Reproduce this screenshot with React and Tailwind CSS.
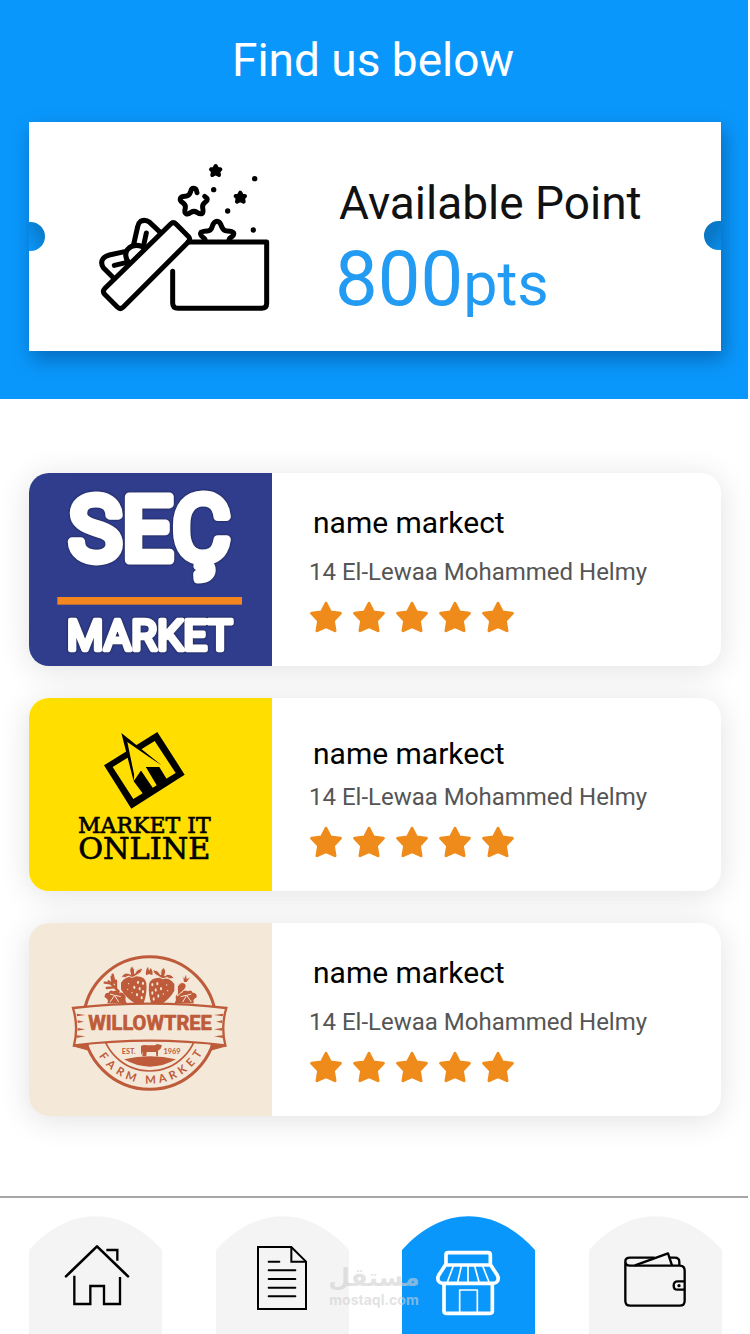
import React from 'react';
import clsx from 'clsx';

const GiftIcon = () => (
  <svg
    viewBox="0 0 630 510"
    className="w-[210px] h-[170px] shrink-0"
    fill="none"
    stroke="#000"
    strokeWidth="15"
    strokeLinecap="round"
    strokeLinejoin="round"
    aria-hidden="true"
  >
    {/* Box */}
    <path d="M324 276 H560 V460 Q560 475 545 475 H294 Q278 475 278 459 V364" />
    {/* Lid */}
    <path d="M272 222 Q280 214 288 222 L326 260 Q332 268 325 276 L130 471 Q121 480 112 471 L74 433 Q66 424 75 415 Z" />
    {/* Bow */}
    <path d="M103 386 L70 353 Q60 338 70 325 Q76 318 88 315 L134 305" />
    <path d="M241 247 L209 217 Q196 207 182 214 Q175 219 173 230 L161 283" />
    <path d="M148 341 Q130 318 142 299 Q160 280 185 289 L193 297" />
    <path d="M103 346 L141 337" />
    <path d="M199 249 L190 290" />
    {/* Open star */}
    <path d="M351 128 Q349 115 341 115 Q334 115 332 125 Q328 139 316 139 Q304 139 301 145 Q299 152 308 158 Q318 165 316 174 Q312 188 318 191 Q324 194 333 187 Q342 181 351 187 Q361 194 367 190 Q371 187 368 174 Q366 165 374 158 Q385 151 381 145 L374 139" />
    {/* Star leaving the box */}
    <path d="M375 273 Q377 267 369 262 Q358 253 363 247 Q367 244 382 243 Q393 243 397 229 Q402 214 411 214 Q420 214 425 230 Q430 243 441 243 Q457 243 461 249 Q463 255 453 262 Q446 267 447 273" />
    {/* Small stars and sparks */}
    <g fill="#000" strokeWidth="12">
      <path d="M407 48 L412 57 L421 58 L415 64 L417 75 L407 70 L397 75 L399 64 L393 58 L402 57 Z" />
      <path d="M481 128 L486 137 L495 138 L489 144 L491 155 L481 150 L471 155 L473 144 L467 138 L476 137 Z" />
      <circle cx="407" cy="63" r="6" />
      <circle cx="481" cy="143" r="6" />
    </g>
    <g fill="#000" stroke="none">
      <circle cx="524" cy="86" r="8" />
      <circle cx="401" cy="119" r="8" />
      <circle cx="443" cy="183" r="8" />
      <circle cx="520" cy="240" r="8" />
    </g>
  </svg>
);

const SecLogo = () => (
  <svg viewBox="27 39 729 579" className="block w-full h-full bg-[#2f3d8c]" role="img" aria-label="SEÇ Market">
    <g
      className="font-['Roboto',sans-serif] drop-shadow-[0_0_3px_#151a3c]"
      fill="#fff"
      stroke="#fff"
      strokeLinejoin="round"
    >
      <text y="300" fontSize="268" strokeWidth="27">
        <tspan x="146">S</tspan>
        <tspan x="306">E</tspan>
        <tspan x="457">Ç</tspan>
      </text>
      <text x="389" y="571" fontSize="126" strokeWidth="13" textAnchor="middle">MARKET</text>
    </g>
    <rect x="112" y="411" width="554" height="23" fill="#f5851f" />
  </svg>
);

const MarketItLogo = () => (
  <svg viewBox="27 24 729 579" className="block w-full h-full bg-[#ffde00]" role="img" aria-label="Market It Online">
    <path fillRule="evenodd" d="M252 226 L412 126 L494 254 L334 356 Z M278 231 L340 327 L467 249 L404 153 Z" />
    <path d="M341 274 L364 240 L400 292 L409 287 L377 231 L418 231 L440 267 L369 311 Z" />
    <path d="M304 129 L424 225 L350 180 L341 274 Z" />
    <path d="M322 156 L413 219 L374 231 L363 240 L344 262 Z" fill="#ffde00" />
    <path d="M362 240 L377 231 L410 286 L398 293 Z" fill="#ffde00" />
    <g className="font-['DejaVu_Serif',serif]" textAnchor="middle" stroke="#000" strokeWidth="2">
      <text x="373" y="428" fontSize="66">MARKET IT</text>
      <text x="373" y="508" fontSize="91">ONLINE</text>
    </g>
  </svg>
);

const Strawberry = () => (
  <g>
    <path d="M183 128 Q196 108 225 109 Q256 108 259 130 Q262 160 251 190 H224 Q196 172 183 148 Z" fill="#be5b3a" />
    <path d="M183 111 Q196 92 212 103 Q205 85 216 79 Q226 86 224 101 Q232 84 249 86 Q244 101 229 106 Q216 117 207 108 Q196 116 183 111 Z" fill="#be5b3a" stroke="#f4e8d9" strokeWidth="3" />
    <g fill="#f4e8d9">
      <ellipse cx="234" cy="127" rx="3" ry="5" />
      <ellipse cx="249" cy="130" rx="3" ry="5" />
      <ellipse cx="223" cy="142" rx="3" ry="5" />
      <ellipse cx="239" cy="146" rx="3" ry="5" />
      <ellipse cx="249" cy="155" rx="3" ry="5" />
      <ellipse cx="231" cy="164" rx="3" ry="5" />
      <ellipse cx="245" cy="173" rx="3" ry="5" />
      <circle cx="206" cy="131" r="2" />
      <circle cx="203" cy="148" r="2" />
      <circle cx="216" cy="158" r="2" />
    </g>
  </g>
);

const Leaves = () => (
  <g fill="#be5b3a">
    <path d="M134 172 Q132 158 146 158 Q150 148 160 154 Q172 148 178 158 Q192 156 197 170 Q194 178 200 190 H142 Q148 178 134 172 Z" />
    <path d="M150 186 L164 166 L176 186 M164 166 L150 162 M166 166 L182 170" fill="none" stroke="#f4e8d9" strokeWidth="3" />
  </g>
);

// Letters sit on the lower arc of the badge, angles are measured from the bottom
const arcLetters = [
  ['F', 54], ['A', 43], ['R', 31], ['M', 19],
  ['M', -1], ['A', -13], ['R', -24], ['K', -35], ['E', -46], ['T', -57],
];

const WillowtreeLogo = () => (
  <svg viewBox="-93 -51 729 579" className="block w-full h-full bg-[#f4e8d9]" role="img" aria-label="Willowtree Farm Market">
    <circle cx="269" cy="249" r="199" fill="none" stroke="#be5b3a" strokeWidth="9" />
    <path d="M125 249 A144 144 0 0 0 413 249" fill="none" stroke="#be5b3a" strokeWidth="5" />
    {/* Produce */}
    <Leaves />
    <g transform="translate(544 0) scale(-1 1)">
      <Leaves />
    </g>
    <path
      d="M176 154 L146 124 M158 136 L155 110 M150 130 L134 128 M168 146 L168 122 M160 142 L140 144 M164 128 L158 104"
      fill="none"
      stroke="#be5b3a"
      strokeWidth="7"
      strokeLinecap="round"
    />
    <path d="M352 140 Q362 122 374 130 Q384 138 372 150 L352 168 Z" fill="#be5b3a" stroke="#f4e8d9" strokeWidth="3" />
    <Strawberry />
    <g transform="translate(526 4) scale(-1 1)">
      <Strawberry />
    </g>
    <path d="M258 106 Q256 90 264 80 L267 92 L272 84 Q280 94 277 106 L268 102 Z" fill="#be5b3a" />
    <path d="M368 106 L372 118 L378 104 L380 118 L390 112 L380 126 H372 Z" fill="#be5b3a" />
    {/* Ribbon */}
    <path d="M40 318 L84 330 L84 306 Z M498 318 L454 330 L454 306 Z" fill="#be5b3a" stroke="#be5b3a" strokeWidth="3" />
    <path
      d="M39 204 Q270 178 499 204 Q482 260 496 316 Q270 288 42 316 Q56 260 39 204 Z"
      fill="#f4e8d9"
      stroke="#be5b3a"
      strokeWidth="7"
    />
    <path
      d="M50 221 L76 225 L51 229 Z M53 241 L72 245 L53 249 Z M53 264 L76 268 L53 272 Z M50 286 L76 289 L49 294 Z M490 221 L462 225 L488 229 Z M486 241 L468 245 L486 249 Z M486 264 L462 268 L486 272 Z M488 286 L462 289 L489 294 Z"
      fill="#be5b3a"
    />
    <text
      x="270"
      y="270"
      textAnchor="middle"
      fontSize="60"
      fill="#be5b3a"
      stroke="#be5b3a"
      strokeWidth="2"
      className="font-['Roboto',sans-serif] font-bold"
    >
      WILLOWTREE
    </text>
    {/* Cow on the hill */}
    <path d="M192 358 Q270 340 348 358 Q310 380 270 380 Q230 380 192 358 Z" fill="#be5b3a" />
    <path
      d="M243 318 Q250 313 262 316 H284 L292 312 L306 316 L302 326 L294 332 L294 349 H289 L288 336 H260 L259 349 H247 L248 334 L243 346 Z"
      fill="#be5b3a"
    />
    <g fill="#be5b3a" textAnchor="middle" className="font-['Lato',sans-serif] font-bold">
      <text x="206" y="343" fontSize="22">EST.</text>
      <text x="336" y="341" fontSize="22">1969</text>
      {arcLetters.map(([letter, angle]) => (
        <text key={angle} x="269" y="431" fontSize="34" transform={`rotate(${angle} 269 249)`}>
          {letter}
        </text>
      ))}
    </g>
  </svg>
);

const Star = () => (
  <svg viewBox="0 0 96 96" className="w-8 h-8" aria-hidden="true">
    <path
      d="M48 7 L61 33 L91 37 L70 59 L75 89 L48 77 L21 89 L26 59 L5 37 L35 33 Z"
      fill="#ef8b1b"
      stroke="#ef8b1b"
      strokeWidth="9"
      strokeLinejoin="round"
    />
  </svg>
);

const HomeIcon = () => (
  <g fill="none" stroke="#000" strokeWidth="7">
    <path d="M198 289 L291 199 L384 289" strokeWidth="8" strokeLinecap="round" strokeLinejoin="round" />
    <path d="M319 210 H352 V242" />
    <path d="M223 287 V372 H271 V318 H312 V372 H360 V291" />
  </g>
);

const DocumentIcon = () => (
  <g fill="none" stroke="#000" strokeWidth="6">
    <path d="M874 201 H774 V387 H918 V245 Z" />
    <path d="M874 201 V245 H918" />
    <path d="M806 245 H838 M806 271 H886 M806 297 H886 M806 323 H886 M806 349 H886" strokeLinecap="round" />
  </g>
);

const StoreIcon = () => (
  <g fill="none" stroke="#fff" strokeWidth="11" strokeLinejoin="round">
    <path d="M378 252 V224 Q378 218 384 218 H504 Q511 218 511 224 V252" />
    <path d="M376 255 H512 L532 286 Q537 296 532 304 Q528 310 520 310 H368 Q360 310 356 304 Q351 296 356 286 Z" />
    <path d="M372 312 V394 Q372 400 378 400 H510 Q517 400 517 394 V312" />
    <path d="M419 396 V330 H472 V396" strokeWidth="5" />
    <path d="M400 258 L382 306 M424 258 L413 306 M444 258 V306 M464 258 L477 306 M488 258 L507 306" strokeWidth="5" />
  </g>
);

const WalletIcon = () => (
  <g fill="none" stroke="#000" strokeWidth="7" strokeLinejoin="round">
    <path d="M916 246 V362 Q916 377 931 377 H1079 Q1094 377 1094 362 V272 Q1094 257 1079 257 H930 Q916 257 916 244 Q916 233 930 233 H1004" />
    <path d="M945 256 L1044 220 L1056 256" />
    <path d="M1050 233 H1064 Q1078 233 1078 246 V256" />
    <path d="M1094 304 H1073 Q1061 304 1061 317 Q1061 329 1073 329 H1094" />
    <circle cx="1077" cy="317" r="5" fill="#000" stroke="none" />
  </g>
);

const markets = [
  { id: 1, name: 'name markect', address: '14 El-Lewaa Mohammed Helmy', rating: 5, logo: SecLogo },
  { id: 2, name: 'name markect', address: '14 El-Lewaa Mohammed Helmy', rating: 5, logo: MarketItLogo, compact: true },
  { id: 3, name: 'name markect', address: '14 El-Lewaa Mohammed Helmy', rating: 5, logo: WillowtreeLogo },
];

const tabs = [
  { id: 'home', label: 'Home', icon: HomeIcon, viewBox: '87 108 399 354' },
  { id: 'orders', label: 'Orders', icon: DocumentIcon, viewBox: '648 108 399 354' },
  { id: 'stores', label: 'Stores', icon: StoreIcon, viewBox: '246 108 399 354' },
  { id: 'wallet', label: 'Wallet', icon: WalletIcon, viewBox: '807 108 399 354' },
];

const PointsTicket = () => (
  <section className="relative flex items-start bg-white pl-[51px] pt-7 pb-7 shadow-[3px_8px_18px_rgba(0,40,90,0.4)]">
    <span className="absolute left-0 top-[100px] w-4 h-[29px] rounded-r-full bg-linear-to-tr from-[#0a97fb] via-[#0a85dc] to-[#0874c2]" />
    <span className="absolute right-0 top-[99px] w-[17px] h-[29px] rounded-l-full bg-linear-to-br from-[#0873c0] via-[#097acb] to-[#0a8eec]" />
    <GiftIcon />
    <div className="ml-[45px] pt-[25px]">
      <h2 className="pl-1 text-[46px] leading-14 text-[#111]">Available Point</h2>
      <p className="mt-1 text-[76px] leading-[88px] text-[#239bf2]">
        800<span className="text-[61px] leading-none">pts</span>
      </p>
    </div>
  </section>
);

const MarketCard = ({ market }) => (
  <li className="flex h-[193px] overflow-hidden rounded-[20px] bg-white shadow-[0_4px_32px_rgba(0,0,0,0.12)]">
    <div className="w-[243px] shrink-0">
      <market.logo />
    </div>
    <div className={clsx('flex-1 pl-[37px]', market.compact ? 'pt-[38px]' : 'pt-8')}>
      <h3 className="pl-1 text-[30px] leading-9 text-black">{market.name}</h3>
      <p className={clsx('text-2xl leading-7 text-[#555]', market.compact ? 'mt-[11px]' : 'mt-[17px]')}>
        {market.address}
      </p>
      <div className="mt-[15px] flex gap-[11px] pl-px" role="img" aria-label={`${market.rating} stars`}>
        {Array.from({ length: market.rating }, (_, i) => (
          <Star key={i} />
        ))}
      </div>
    </div>
  </li>
);

const BottomNav = ({ activeTab, onTabChange }) => (
  <nav className="relative mt-20 flex justify-between border-t-2 border-[#a6a6a6] pl-[29px] pr-[26px] pt-[18px]">
    {tabs.map((tab) => {
      const isActive = activeTab === tab.id;
      return (
        <button key={tab.id} onClick={() => onTabChange(tab.id)} aria-label={tab.label} className="relative w-[133px] h-[118px]">
          <svg viewBox="0 0 133 118" className={clsx('absolute inset-0 w-full h-full', isActive ? 'text-[#0a97fb]' : 'text-[#f4f4f4]')}>
            <path d="M0 34 C40 -11 93 -11 133 34 V118 H0 Z" fill="currentColor" />
          </svg>
          <svg viewBox={tab.viewBox} className="relative block w-full h-full">
            <tab.icon />
          </svg>
        </button>
      );
    })}
    {/* Watermark */}
    <div className="pointer-events-none absolute left-1/2 bottom-[26px] -translate-x-1/2 text-center font-bold text-[#d0d0d0]/60">
      <p className="font-['DejaVu_Sans',sans-serif] text-[25px] leading-7" lang="ar" dir="rtl">مستقل</p>
      <p className="font-['Inter',sans-serif] text-sm leading-4">mostaql.com</p>
    </div>
  </nav>
);

const App = () => {
  const [activeTab, setActiveTab] = React.useState('stores');

  return (
    <div className="bg-white pr-0.5 font-['Roboto',sans-serif]">
      <header className="bg-[#0a97fb] pl-[29px] pt-7 pb-12 pr-[27px]">
        <h1 className="mb-[30px] pr-1 text-center text-[46px] leading-[64px] text-white">Find us below</h1>
        <PointsTicket />
      </header>
      <main className="pl-[29px] pr-[27px] pt-[74px]">
        <ul className="flex flex-col gap-8">
          {markets.map((market) => (
            <MarketCard key={market.id} market={market} />
          ))}
        </ul>
      </main>
      <BottomNav activeTab={activeTab} onTabChange={setActiveTab} />
    </div>
  );
};

export default App;
